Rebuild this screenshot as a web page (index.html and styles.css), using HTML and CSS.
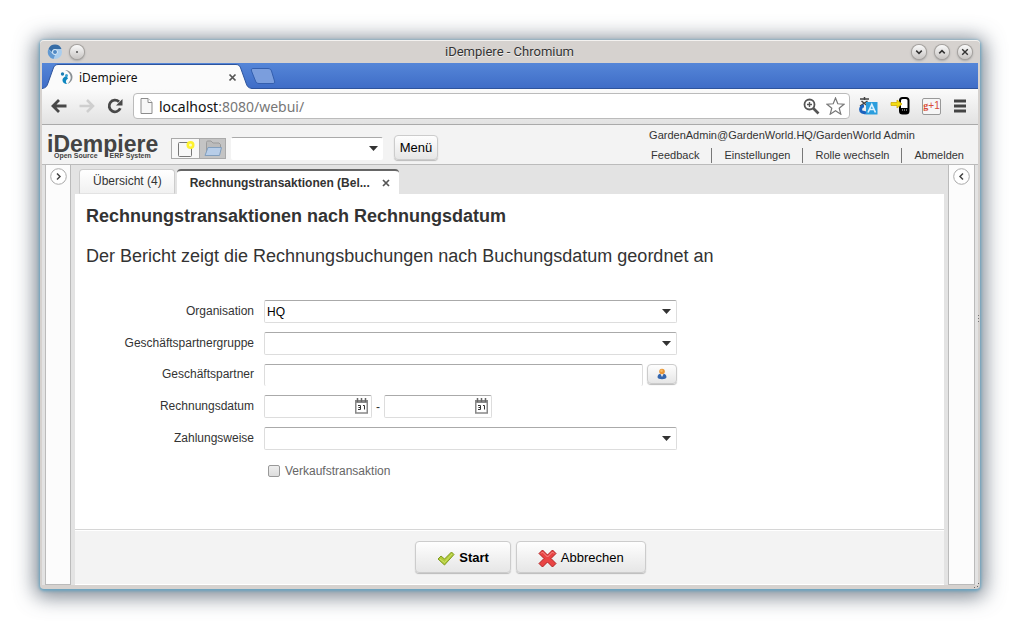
FILE: index.html
```html
<!DOCTYPE html>
<html lang="de">
<head>
<meta charset="utf-8">
<title>iDempiere</title>
<link rel="stylesheet" href="styles.css">
</head>
<body>
<div class="window">
  <header class="titlebar">
    <div class="title-side">
      <svg width="16" height="16" viewBox="0 0 16 16"><circle cx="8" cy="8" r="7" fill="#a9cdee"/><path d="M1.5 5A7 7 0 0 1 14.5 5H8a3 3 0 0 0-3 3z" fill="#376da6"/><path d="M1.500 5 5.500 10 8 11 6.500 15A7 7 0 0 1 1.500 5z" fill="#6299d2"/><circle cx="8" cy="8" r="2.500" fill="#4f88c4" stroke="#dcecf9"/></svg>
      <button class="round" aria-label="Fenstermenü"><svg width="14" height="14" viewBox="0 0 15 15"><circle cx="7.500" cy="7.500" r="1" fill="#444"/></svg></button>
    </div>
    <div class="title-text">iDempiere - Chromium</div>
    <div class="title-side title-end">
      <button class="round" aria-label="Minimieren"><svg width="14" height="14" viewBox="0 0 15 15"><path d="m4.500 6 3 3 3-3" fill="none" stroke="#333" stroke-width="1.600"/></svg></button>
      <button class="round" aria-label="Maximieren"><svg width="14" height="14" viewBox="0 0 15 15"><path d="m4.500 9 3-3 3 3" fill="none" stroke="#333" stroke-width="1.600"/></svg></button>
      <button class="round" aria-label="Schließen"><svg width="14" height="14" viewBox="0 0 15 15"><path d="m4.500 4.500 6 6m0-6-6 6" fill="none" stroke="#333" stroke-width="1.500"/></svg></button>
    </div>
  </header>

  <div class="browser">
    <div class="tabstrip">
      <div class="browser-tab">
        <svg class="tab-shape" width="214" height="26" viewBox="0 0 214 26"><path d="M0 25.500C4 25 5 23 6 20L11 6c1-3 2-4.500 5-4.500H194c3 0 4 1.500 5 4.500l5 14c1 3 2 5 6 5.500V27H0z" fill="#fbfbfb" stroke="#2e549c"/></svg>
        <svg class="tab-icon" width="13" height="16" viewBox="0 0 13 16"><path d="M5 1c4 0 7.500 3 7.500 7 0 3-1.500 5.500-5 7 2-2.500 3.500-4.500 3.200-7C10.300 5 8.500 2.500 5 1z" fill="#8a9095"/><circle cx="2.500" cy="5" r="1.700" fill="#1c7fb5"/><path d="M6.500 7C3.500 8 2.300 9.500 2.500 11.500S4.500 15 7 15c-1.700-2-1.500-4 1-5.500" fill="#0d87c0"/><circle cx="6.500" cy="6.500" r="1.500" fill="#3aa0cf"/></svg>
        <span class="tab-name">iDempiere</span>
        <button class="plain" aria-label="Tab schließen"><svg width="9" height="9" viewBox="0 0 9 9"><path d="m1.500 1.500 6 6m0-6-6 6" stroke="#555" stroke-width="1.700"/></svg></button>
      </div>
      <button class="plain" aria-label="Neuer Tab"><svg width="26" height="16" viewBox="0 0 26 16"><path d="M3 .5H18c2 0 3 1 3.500 2.500l3 10c.5 1.500 0 2.500-1.500 2.500H9c-2 0-3-1-3.500-2.500L1.500 3C1 1.500 1.500.5 3 .5z" fill="#7b9edd" stroke="#345fae"/></svg></button>
    </div>

    <div class="toolbar">
      <button class="plain" aria-label="Zurück"><svg width="16" height="14" viewBox="0 0 16 14"><path d="M8 1 2 7l6 6M2.500 7H15.500" fill="none" stroke="#484848" stroke-width="2.800"/></svg></button>
      <button class="plain" aria-label="Vorwärts"><svg width="16" height="14" viewBox="0 0 16 14"><path d="m8 1 6 6-6 6M13.500 7H.5" fill="none" stroke="#cfcfcf" stroke-width="2.500"/></svg></button>
      <button class="plain" aria-label="Neu laden"><svg width="16" height="16" viewBox="0 0 16 16"><path d="M13.300 10.300A5.800 5.800 0 1 1 12 3.800" fill="none" stroke="#484848" stroke-width="2.800"/><path d="M15.500 1v6.500H9z" fill="#484848"/></svg></button>
      <div class="omnibox">
        <svg width="13" height="16" viewBox="0 0 13 16"><path d="M1 .5h7l4 4v11H1z" fill="#f7f7f7" stroke="#8c8c8c"/><path d="M8 .5v4h4" fill="#fff" stroke="#8c8c8c"/></svg>
        <div class="url" role="textbox" aria-label="Adresse" tabindex="0">localhost<span>:8080/webui/</span></div>
        <svg width="17" height="17" viewBox="0 0 17 17"><circle cx="6.500" cy="6.500" r="5" fill="none" stroke="#555" stroke-width="1.800"/><path d="M6.500 4v5M4 6.500h5" stroke="#555" stroke-width="1.400"/><path d="m10 10 5.500 5.500" stroke="#555" stroke-width="2.600"/></svg>
        <svg width="19" height="18" viewBox="0 0 19 18"><path d="m9.500 1 2.300 5.800 6.200.4-4.800 4 1.600 6-5.300-3.400-5.300 3.400 1.600-6L1 7.200l6.200-.4z" fill="#fff" stroke="#777" stroke-width="1.200"/></svg>
      </div>
      <div class="extensions">
        <button class="plain" aria-label="Übersetzen"><svg width="19" height="18" viewBox="0 0 19 18"><path d="M1 2h9M5.500 0v3M2.500 4l6 5M8.500 4 1 9" stroke="#444" stroke-width="1.500" fill="none"/><path d="M5 9C1 9 1 14 3 15l4 1" stroke="#1a62bd" stroke-width="3" fill="none"/><path d="M7 5h11.500v12.500H7z" fill="#2a9ddd"/><path d="m9 15.500 3.800-8 3.700 8m-6-3H15" stroke="#d9f1ff" stroke-width="1.700" fill="none"/></svg></button>
        <button class="plain" aria-label="An Telefon senden"><svg width="20" height="18" viewBox="0 0 20 18"><rect x="10" y="1" width="8.500" height="15.500" rx="2.500" fill="#fff" stroke="#000" stroke-width="2"/><path d="M10 11h9v5h-9z" fill="#000"/><path d="M12 13h1m1 0h1m1 0h1" stroke="#ddd"/><path d="M1 5.500h6V3l5 4-5 4V8.500H1z" fill="#f4dc11" stroke="#cfaa08" stroke-width=".8"/></svg></button>
        <button class="gplus" aria-label="Google +1"><span>g</span>+1</button>
        <button class="plain" aria-label="Browsermenü"><svg width="14" height="14" viewBox="0 0 14 14"><path d="M1 2h12M1 7h12M1 12h12" stroke="#444" stroke-width="2.800"/></svg></button>
      </div>
    </div>

    <div class="app">
      <div class="app-header">
        <div class="logo"><span class="logo-name">iDempiere</span><span class="logo-tag"><span>Open Source</span><span>ERP System</span></span></div>
        <div class="segment">
          <button aria-label="Neu"><svg width="18" height="18" viewBox="0 0 18 18"><rect x="1.500" y="2.500" width="13" height="14" rx="1" fill="#f7f7f7" stroke="#777"/><circle cx="13.500" cy="5" r="4" fill="#fdf22e"/><circle cx="13.500" cy="5" r="1.500" fill="#fffcc5"/></svg></button>
          <button class="pressed" aria-label="Öffnen"><svg width="20" height="17" viewBox="0 0 20 17"><path d="M3.500 15V2.500C3.500 1.500 4 1 5 1h3l2 2h6l1.500 1.500V12" fill="#bbb" stroke="#9b9b9b"/><path d="M5 7.500h13.500L16.500 15.500H2z" fill="#b7cde8" stroke="#829fbe"/></svg></button>
        </div>
        <div class="combo search"><select aria-label="Suche"><option></option></select><svg class="caret" width="9" height="5" viewBox="0 0 9 5"><path d="M0 0h9L4.500 5z" fill="#333"/></svg></div>
        <button class="btn menu-btn">Menü</button>
        <div class="account">
          <div class="user">GardenAdmin@GardenWorld.HQ/GardenWorld Admin</div>
          <nav><a href="#">Feedback</a><a href="#">Einstellungen</a><a href="#">Rolle wechseln</a><a href="#">Abmelden</a></nav>
        </div>
      </div>

      <div class="workspace">
        <aside class="rail"><button class="rail-btn" aria-label="Linkes Feld öffnen"><svg width="17" height="17" viewBox="0 0 17 17"><circle cx="8.500" cy="8.500" r="7.800" fill="#fff" stroke="#aaa"/><path d="m7 5.500 3 3-3 3" fill="none" stroke="#444" stroke-width="1.500"/></svg></button></aside>
        <main class="desktop">
          <div class="tabs" role="tablist">
            <button class="tab" role="tab">Übersicht (4)</button>
            <div class="tab active" role="tab" aria-selected="true">Rechnungstransaktionen (Bel...<button class="plain" aria-label="Schließen"><svg width="8" height="8" viewBox="0 0 8 8"><path d="m1 1 6 6m0-6L1 7" stroke="#555" stroke-width="1.700"/></svg></button></div>
          </div>
          <form class="report">
            <div class="report-body">
              <h1>Rechnungstransaktionen nach Rechnungsdatum</h1>
              <p>Der Bericht zeigt die Rechnungsbuchungen nach Buchungsdatum geordnet an</p>
              <div class="fields">
                <label for="org">Organisation</label>
                <div class="combo"><select id="org"><option>HQ</option></select><svg class="caret" width="9" height="5" viewBox="0 0 9 5"><path d="M0 0h9L4.500 5z" fill="#333"/></svg></div>
                <label for="group">Geschäftspartnergruppe</label>
                <div class="combo"><select id="group"><option></option></select><svg class="caret" width="9" height="5" viewBox="0 0 9 5"><path d="M0 0h9L4.500 5z" fill="#333"/></svg></div>
                <label for="partner">Geschäftspartner</label>
                <div class="lookup"><input id="partner" type="text"><button class="btn" type="button" aria-label="Partner suchen"><svg width="10" height="12" viewBox="0 0 10 12"><path d="M.5 9c0-2.500 2-3.500 4.500-3.500S9.500 6.500 9.500 9c0 3-9 3-9 0z" fill="#3566ad"/><path d="m3.500 6 1.500 3 1.500-3z" fill="#eee"/><circle cx="5" cy="3.500" r="2.800" fill="#e99636"/><circle cx="4.500" cy="2.800" r="1.300" fill="#f8bd68"/></svg></button></div>
                <label for="from">Rechnungsdatum</label>
                <div class="dates">
                  <div class="date"><input id="from" type="text"><button class="plain" type="button" aria-label="Kalender"><svg width="13" height="16" viewBox="0 0 13 16"><rect x=".75" y="3" width="11.500" height="12" fill="#fff" stroke="#888" stroke-width="1.500"/><path d="M0 2h13v3H0z" fill="#888"/><path d="M2.500 0v4m4-4v4m4-4v4" stroke="#666" stroke-width="1.500"/><path d="M3 7.500h2.500v4H3m.5-2h2M8 7.500h1.500v4" fill="none" stroke="#333"/></svg></button></div>
                  <span>-</span>
                  <div class="date"><input type="text" aria-label="Rechnungsdatum bis"><button class="plain" type="button" aria-label="Kalender"><svg width="13" height="16" viewBox="0 0 13 16"><rect x=".75" y="3" width="11.500" height="12" fill="#fff" stroke="#888" stroke-width="1.500"/><path d="M0 2h13v3H0z" fill="#888"/><path d="M2.500 0v4m4-4v4m4-4v4" stroke="#666" stroke-width="1.500"/><path d="M3 7.500h2.500v4H3m.5-2h2M8 7.500h1.500v4" fill="none" stroke="#333"/></svg></button></div>
                </div>
                <label for="pay">Zahlungsweise</label>
                <div class="combo"><select id="pay"><option></option></select><svg class="caret" width="9" height="5" viewBox="0 0 9 5"><path d="M0 0h9L4.500 5z" fill="#333"/></svg></div>
                <label class="check"><input type="checkbox">Verkaufstransaktion</label>
              </div>
            </div>
            <footer class="actions">
              <button class="btn start" type="button"><svg width="18" height="15" viewBox="0 0 18 15"><path d="m1 8 3-3 3.500 3L14.500 1 17 3.500 7.500 14z" fill="#b1cb3a" stroke="#819a20"/><path d="m3 8 4.500 3.500L15 3" fill="none" stroke="#cfe268"/></svg>Start</button>
              <button class="btn cancel" type="button"><svg width="19" height="19" viewBox="0 0 19 19"><path d="m1 4.500 3.500-3.500 5 5 5-5L18 4.500l-5 5 5 5-3.500 3.500-5-5-5 5L1 14.500l5-5z" fill="#e94444" stroke="#b22222" stroke-linejoin="round"/><path d="m3 4.500 1.500-1.500 5 5 5-5L16 4.500" fill="none" stroke="#f69090"/></svg>Abbrechen</button>
            </footer>
          </form>
        </main>
        <aside class="rail rail-end"><button class="rail-btn" aria-label="Rechtes Feld öffnen"><svg width="17" height="17" viewBox="0 0 17 17"><circle cx="8.500" cy="8.500" r="7.800" fill="#fff" stroke="#aaa"/><path d="m10 5.500-3 3 3 3" fill="none" stroke="#444" stroke-width="1.500"/></svg></button></aside>
      </div>
    </div>
  </div>
  <svg class="grip-side" width="4" height="8" viewBox="0 0 4 8"><path d="M1 0h1v1H1zm0 3h1v1H1zm0 3h1v1H1z" fill="#777"/></svg>
  <svg class="grip-corner" width="6" height="6" viewBox="0 0 6 6"><path d="M4 0h1v1H4zM3 3h1v1H3zM0 4h1v1H0z" fill="#666"/></svg>
</div>
</body>
</html>
```
FILE: styles.css
```css
* { box-sizing: border-box; }

body {
  margin: 0;
  min-height: 100vh;
  display: flex;
  padding: 40px;
  background: #fff;
  color: #333;
  font-family: "Liberation Sans", Arial, sans-serif;
  font-size: 12px;
}

button, input, select { font: inherit; color: inherit; margin: 0; }
svg { display: block; flex: none; }

.plain { padding: 0; border: 0; background: none; flex: none; }

.window {
  position: relative;
  flex: 1;
  display: flex;
  flex-direction: column;
  padding: 0 2px 4px;
  border-radius: 4px;
  background: #d6d2cf;
  box-shadow: inset 0 1px #f4f2f0, 0 1px 3px 1px #6aa5c2, 0 3px 20px 5px rgba(70, 82, 98, .7);
}

/* Window frame */
.titlebar {
  display: flex;
  align-items: center;
  height: 23px;
  padding: 0 6px 0 5px;
  font-family: Roboto, sans-serif;
  font-size: 13px;
  color: #333;
  text-shadow: 0 1px #f2f0ee;
}
.title-side { flex: 1; display: flex; align-items: center; gap: 7px; }
.title-end { justify-content: flex-end; gap: 9px; }
.title-text { line-height: 16px; }
.round {
  padding: 0;
  border: 0;
  border-radius: 50%;
  background: linear-gradient(#fafafa, #c8c5c3);
  box-shadow: 0 0 0 1px #a5a19e, 0 1px 2px 1px #aaa;
}

.browser { flex: 1; display: flex; flex-direction: column; }
.tabstrip {
  display: flex;
  align-items: center;
  height: 26px;
  border-bottom: 1px solid #2e549c;
  background: linear-gradient(#5586d8, #3f6dc7);
}
.browser-tab {
  position: relative;
  display: flex;
  align-items: center;
  gap: 6px;
  width: 208px;
  height: 26px;
  padding: 3px 13px 0 18px;
  font: 12px "Noto Sans", sans-serif;
  color: #111;
}
.tab-shape { position: absolute; top: 0; left: 0; }
.browser-tab > :not(.tab-shape) { position: relative; }
.tab-name { flex: 1; }

.toolbar {
  display: flex;
  align-items: center;
  gap: 12px;
  height: 36px;
  padding: 0 11px 1px 9px;
  border-bottom: 1px solid #aaa;
  background: linear-gradient(#fbfbfb, #e2e2e2);
}
.omnibox {
  flex: 1;
  display: flex;
  align-items: center;
  gap: 6px;
  height: 26px;
  margin-left: -2px;
  padding: 0 4px 0 6px;
  border: 1px solid #bbb;
  border-radius: 4px;
  background: #fff;
}
.url { flex: 1; font: 14px "Noto Sans", sans-serif; color: #111; }
.url span { color: #777; }
.extensions { display: flex; align-items: center; gap: 12px; margin-left: -3px; }
.gplus {
  width: 19px;
  height: 17px;
  padding: 0;
  border: 1px solid #999;
  border-radius: 2px;
  background: #f6f6f6;
  color: #d84b37;
  font-size: 10px;
  line-height: 14px;
}
.gplus span { font-family: "Liberation Serif", serif; font-weight: bold; }

/* Application header */
.app { flex: 1; display: flex; flex-direction: column; background: #e3e3e3; }
.app-header {
  display: flex;
  align-items: flex-start;
  height: 40px;
  padding: 0 14px 0 5px;
  border-bottom: 1px solid #bbb;
  background: #f3f3f3;
}
.logo { width: 124px; padding-top: 8px; color: #444; font-weight: bold; }
.logo-name { display: block; font-size: 23px; line-height: 22px; }
.logo-tag {
  display: flex;
  gap: 12px;
  margin-top: -3px;
  padding-left: 7px;
  font-size: 7px;
  line-height: 7px;
}
.segment { display: flex; margin: 13px 5px 0 0; }
.segment button {
  display: grid;
  place-items: center;
  width: 28px;
  height: 21px;
  padding: 0;
  border: 1px solid #aaa;
  border-right: 0;
  background: #f8f8f8;
}
.segment .pressed { width: 27px; border: 1px solid #aaa; background: #c4c4c4; }

.combo { position: relative; }
.combo select, .lookup input, .date input {
  display: block;
  width: 100%;
  height: 23px;
  padding: 0 2px;
  border: 1px solid #ddd;
  border-top-color: #aaa;
  border-radius: 2px;
  outline: 0;
  appearance: none;
  background: #fff;
  color: #000;
}
.caret { position: absolute; right: 6px; top: 9px; pointer-events: none; }
.search { width: 152px; margin: 12px 11px 0 0; }
.search .caret { right: 5px; }
.search select { border-color: #aaa transparent transparent; }

.btn {
  border: 1px solid #ccc;
  border-radius: 4px;
  background: linear-gradient(#fefefe, #e6e6e6);
  box-shadow: 0 1px 1px #bbb;
  color: #000;
  font-size: 13px;
}
.menu-btn { width: 44px; height: 25px; margin-top: 10px; padding: 0; }

.account { margin-left: auto; font-size: 11px; }
.user { padding: 4px 0 0; line-height: 13px; }
.account nav { display: flex; justify-content: flex-end; margin-top: 6px; }
.account a {
  padding: 0 12px;
  border-left: 1px solid #777;
  color: inherit;
  line-height: 15px;
  text-decoration: none;
}
.account a:first-child { padding-left: 2px; border-left: 0; }
.account a:last-child { padding-right: 0; }

/* Workspace */
.workspace { flex: 1; display: flex; gap: 4px; padding: 0 3px; }
.rail {
  width: 26px;
  padding-top: 3px;
  border: 1px solid #bbb;
  border-top: 0;
  background: #fcfcfc;
}
.rail-end { width: 27px; }
.rail-btn { display: block; margin: 0 auto; padding: 0; border: 0; background: none; }
.desktop { flex: 1; display: flex; flex-direction: column; }
.tabs { display: flex; align-items: flex-end; gap: 2px; height: 29px; padding-left: 4px; }
.tab {
  height: 25px;
  padding: 0 12px 1px 13px;
  border: 1px solid #ccc;
  border-bottom-color: #e3e3e3;
  border-radius: 4px 4px 0 0;
  background: linear-gradient(#fff, #f1f1f1);
}
.tab.active {
  display: flex;
  align-items: center;
  gap: 12px;
  padding: 1px 9px 0 13px;
  border: 0;
  border-top: 2px solid #666;
  background: #fff;
  font-weight: bold;
}

.report { flex: 1; display: flex; flex-direction: column; background: #fff; }
.report-body { flex: 1; padding: 12px 11px; }
h1, .report p { margin: 0; font-size: 18px; line-height: 20px; }
.report p { margin-top: 20px; }
.fields {
  display: grid;
  grid-template-columns: 168px 413px;
  grid-template-rows: 23px 23px 22px;
  grid-auto-rows: 23px;
  gap: 9px 10px;
  align-items: center;
  margin-top: 34px;
}
.fields > label { padding-bottom: 2px; text-align: right; }
.lookup { display: flex; gap: 4px; }
.lookup input { flex: 1; height: 22px; border-bottom: 0; }
.lookup .btn { display: grid; place-items: center; width: 30px; height: 20px; padding: 0; }
.dates { display: flex; align-items: center; gap: 4px; }
.date { position: relative; width: 108px; }
.date button { position: absolute; right: 4px; top: 3px; }
.fields .check {
  grid-column: 2;
  display: flex;
  align-items: center;
  gap: 5px;
  padding: 0 0 0 4px;
  color: #666;
}
.check input {
  width: 12px;
  height: 12px;
  border: 1px solid #999;
  border-radius: 2px;
  appearance: none;
  background: linear-gradient(#eee, #ddd);
}

.actions {
  display: flex;
  justify-content: center;
  gap: 5px;
  margin-bottom: 1px;
  padding: 11px 0 11px 42px;
  border-top: 1px solid #d6d6d6;
  background: #f3f3f3;
  box-shadow: inset 0 1px #fff;
}
.actions .btn { display: flex; align-items: center; justify-content: center; gap: 4px; height: 32px; padding: 0 21px; }
.actions svg { margin-top: 3px; }
.start { font-weight: bold; }

.grip-side { position: absolute; right: -1px; top: 50%; }
.grip-corner { position: absolute; right: 0; bottom: 0; }
```
